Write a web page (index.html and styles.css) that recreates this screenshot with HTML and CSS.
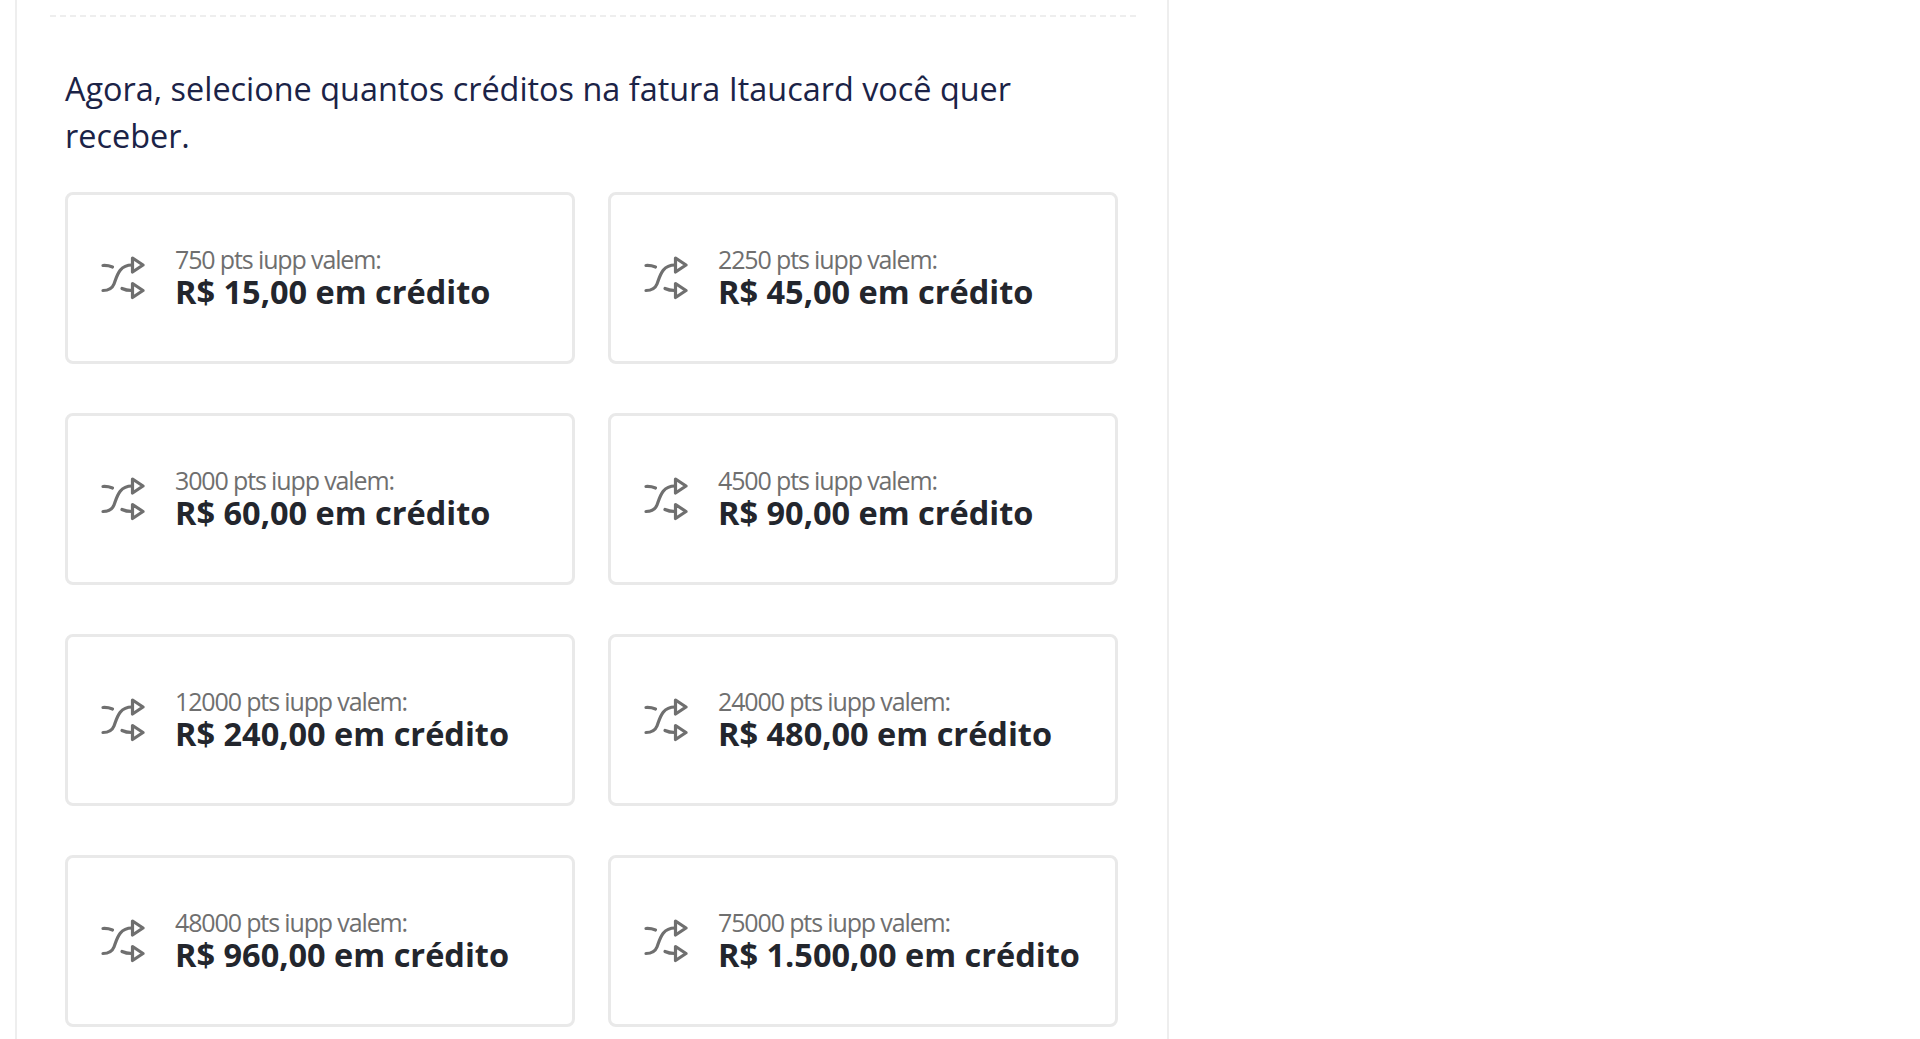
FILE: index.html
```html
<!DOCTYPE html>
<html lang="pt-BR">
<head>
<meta charset="utf-8">
<title>Créditos na fatura</title>
<link rel="stylesheet" href="styles.css">
</head>
<body>
<svg class="sprite" width="0" height="0" aria-hidden="true">
  <symbol id="shuffle" viewBox="0 0 44 44">
    <path d="M2 9.500C5.500 9.300 8.500 9.800 11.500 11" />
    <path d="M2 34.500C7 34.500 11 33 13 28C16 20 18 9 31 9" />
    <path d="M21 32.500C24 34 27 34.500 31 34.500" />
    <path d="M31.500 2L42 9L31.500 16Z" />
    <path d="M31.500 27.500L42 34.500L31.500 41.500Z" />
  </symbol>
</svg>
<main class="panel">
  <hr class="divider">
  <h1 class="title">Agora, selecione quantos créditos na fatura Itaucard você quer receber.</h1>
  <div class="grid">
    <button class="card"><svg class="icon"><use href="#shuffle"/></svg><span class="copy"><span class="pts">750 pts iupp valem:</span><strong class="value">R$ 15,00 em crédito</strong></span></button>
    <button class="card"><svg class="icon"><use href="#shuffle"/></svg><span class="copy"><span class="pts">2250 pts iupp valem:</span><strong class="value">R$ 45,00 em crédito</strong></span></button>
    <button class="card"><svg class="icon"><use href="#shuffle"/></svg><span class="copy"><span class="pts">3000 pts iupp valem:</span><strong class="value">R$ 60,00 em crédito</strong></span></button>
    <button class="card"><svg class="icon"><use href="#shuffle"/></svg><span class="copy"><span class="pts">4500 pts iupp valem:</span><strong class="value">R$ 90,00 em crédito</strong></span></button>
    <button class="card"><svg class="icon"><use href="#shuffle"/></svg><span class="copy"><span class="pts">12000 pts iupp valem:</span><strong class="value">R$ 240,00 em crédito</strong></span></button>
    <button class="card"><svg class="icon"><use href="#shuffle"/></svg><span class="copy"><span class="pts">24000 pts iupp valem:</span><strong class="value">R$ 480,00 em crédito</strong></span></button>
    <button class="card"><svg class="icon"><use href="#shuffle"/></svg><span class="copy"><span class="pts">48000 pts iupp valem:</span><strong class="value">R$ 960,00 em crédito</strong></span></button>
    <button class="card"><svg class="icon"><use href="#shuffle"/></svg><span class="copy"><span class="pts">75000 pts iupp valem:</span><strong class="value">R$ 1.500,00 em crédito</strong></span></button>
  </div>
</main>
</body>
</html>
```
FILE: styles.css
```css
* { box-sizing: border-box; }
html, body { margin: 0; height: 100%; background: #fff; overflow: hidden; }
body { font-family: "Open Sans", "Noto Sans", sans-serif; }
.sprite { position: absolute; }
.panel {
  margin-left: 15px;
  width: 1154px;
  height: 1039px;
  padding: 15px 0 0 48px;
  border-left: 2px solid #eeeeee;
  border-right: 2px solid #eeeeee;
  overflow: hidden;
}
.divider {
  margin: 0 0 0 -15px;
  width: 1086px;
  height: 0;
  border: 0;
  border-top: 2px dashed #eeeeee;
}
.title {
  margin: 48px 0 0;
  width: 1060px;
  font-size: 32.4px;
  font-weight: 400;
  line-height: 47px;
  color: #1b2347;
}
.grid {
  margin-top: 33px;
  display: grid;
  grid-template-columns: 510px 510px;
  grid-auto-rows: 172px;
  column-gap: 33px;
  row-gap: 49px;
}
.card {
  display: flex;
  align-items: center;
  gap: 29px;
  padding: 0 0 0 33px;
  border: 3px solid #e9e9e9;
  border-radius: 8px;
  background: #fff;
  font: inherit;
  text-align: left;
}
.icon {
  flex: none;
  width: 44px;
  height: 44px;
  fill: none;
  stroke: #6f6f6f;
  stroke-width: 3.200;
  stroke-linecap: round;
  stroke-linejoin: round;
}
.copy { display: flex; flex-direction: column; margin: -6px 0 0 1px; }
.pts {
  font-size: 25px;
  line-height: 32px;
  letter-spacing: -1.13px;
  color: #6f6f6f;
}
.value {
  font-size: 32.5px;
  line-height: 33px;
  font-weight: 700;
  color: #23262d;
}
```
